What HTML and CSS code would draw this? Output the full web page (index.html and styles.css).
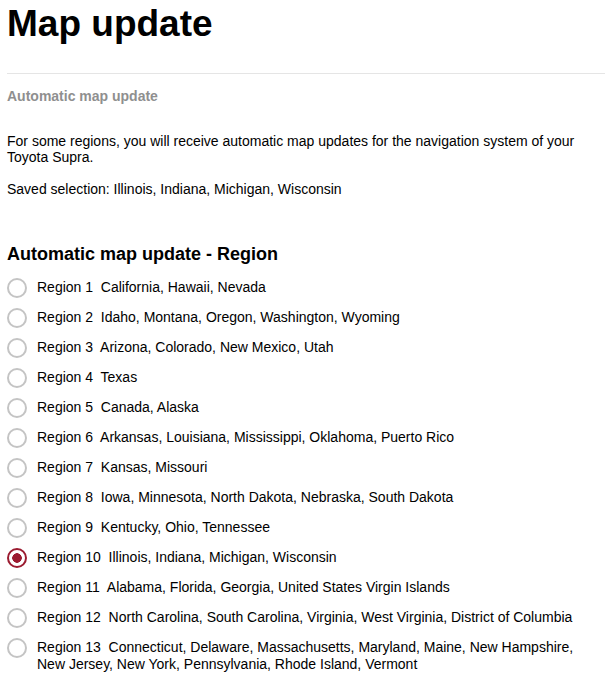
FILE: index.html
```html
<!DOCTYPE html>
<html lang="en">
<head>
    <meta charset="utf-8"/>
    <title>Map update</title>
    <link rel="stylesheet" href="styles.css">
</head>
<body>
    <main class="page">
        <h1 class="title">Map update</h1>
        <hr class="divider">

        <h4 class="subtitle">Automatic map update</h4>
        <p class="text intro">For some regions, you will receive automatic map updates for the navigation system of your Toyota Supra.</p>
        <p class="text">Saved selection: Illinois, Indiana, Michigan, Wisconsin</p>

        <h2 class="section">Automatic map update - Region</h2>
        <form class="regions">
            <label class="region"><input type="radio" name="region"><span>Region 1&nbsp; California, Hawaii, Nevada</span></label>
            <label class="region"><input type="radio" name="region"><span>Region 2&nbsp; Idaho, Montana, Oregon, Washington, Wyoming</span></label>
            <label class="region"><input type="radio" name="region"><span>Region 3&nbsp; Arizona, Colorado, New Mexico, Utah</span></label>
            <label class="region"><input type="radio" name="region"><span>Region 4&nbsp; Texas</span></label>
            <label class="region"><input type="radio" name="region"><span>Region 5&nbsp; Canada, Alaska</span></label>
            <label class="region"><input type="radio" name="region"><span>Region 6&nbsp; Arkansas, Louisiana, Mississippi, Oklahoma, Puerto Rico</span></label>
            <label class="region"><input type="radio" name="region"><span>Region 7&nbsp; Kansas, Missouri</span></label>
            <label class="region"><input type="radio" name="region"><span>Region 8&nbsp; Iowa, Minnesota, North Dakota, Nebraska, South Dakota</span></label>
            <label class="region"><input type="radio" name="region"><span>Region 9&nbsp; Kentucky, Ohio, Tennessee</span></label>
            <label class="region"><input type="radio" name="region" checked><span>Region 10&nbsp; Illinois, Indiana, Michigan, Wisconsin</span></label>
            <label class="region"><input type="radio" name="region"><span>Region 11&nbsp; Alabama, Florida, Georgia, United States Virgin Islands</span></label>
            <label class="region"><input type="radio" name="region"><span>Region 12&nbsp; North Carolina, South Carolina, Virginia, West Virginia, District of Columbia</span></label>
            <label class="region"><input type="radio" name="region"><span>Region 13&nbsp; Connecticut, Delaware, Massachusetts, Maryland, Maine, New Hampshire, New Jersey, New York, Pennsylvania, Rhode Island, Vermont</span></label>
        </form>
    </main>
</body>
</html>
```

FILE: styles.css
```css
body {
    margin: 0;
    padding: 0;
    font-family: "Liberation Sans", Arial, sans-serif;
    font-size: 14px;
    color: #000;
    background-color: #fff;
}

.page {
    padding: 0 1px 0 7px;
}

.title {
    margin: 0;
    padding-top: 3px;
    font-size: 37px;
    line-height: 42px;
    font-weight: bold;
}

.divider {
    border: 0;
    border-top: 1px solid #e5e5e5;
    margin: 28px 0 0 0;
}

.subtitle {
    margin: 14px 0 0 0;
    font-size: 14px;
    line-height: 16px;
    color: #8f8f8f;
}

.text {
    margin: 16px 0 0 0;
    line-height: 16px;
}

.intro {
    margin-top: 29px;
}

.section {
    margin: 46px 0 0 0;
    font-size: 18px;
    line-height: 22px;
}

.regions {
    display: flex;
    flex-direction: column;
    gap: 9px;
    margin-top: 12px;
}

.region {
    display: flex;
    align-items: flex-start;
    gap: 10px;
    line-height: 17px;
}

.region input {
    appearance: none;
    flex: none;
    width: 20px;
    height: 20px;
    margin: 1px 0 0 0;
    border: 2px solid #c4c4c4;
    border-radius: 50%;
    background: #fff;
}

.region input:checked {
    border-color: #9b1b30;
    background: radial-gradient(circle, #9b1b30 0 4.5px, #fff 5px);
}

.region span {
    padding-top: 2px;
    padding-right: 20px;
}
```
